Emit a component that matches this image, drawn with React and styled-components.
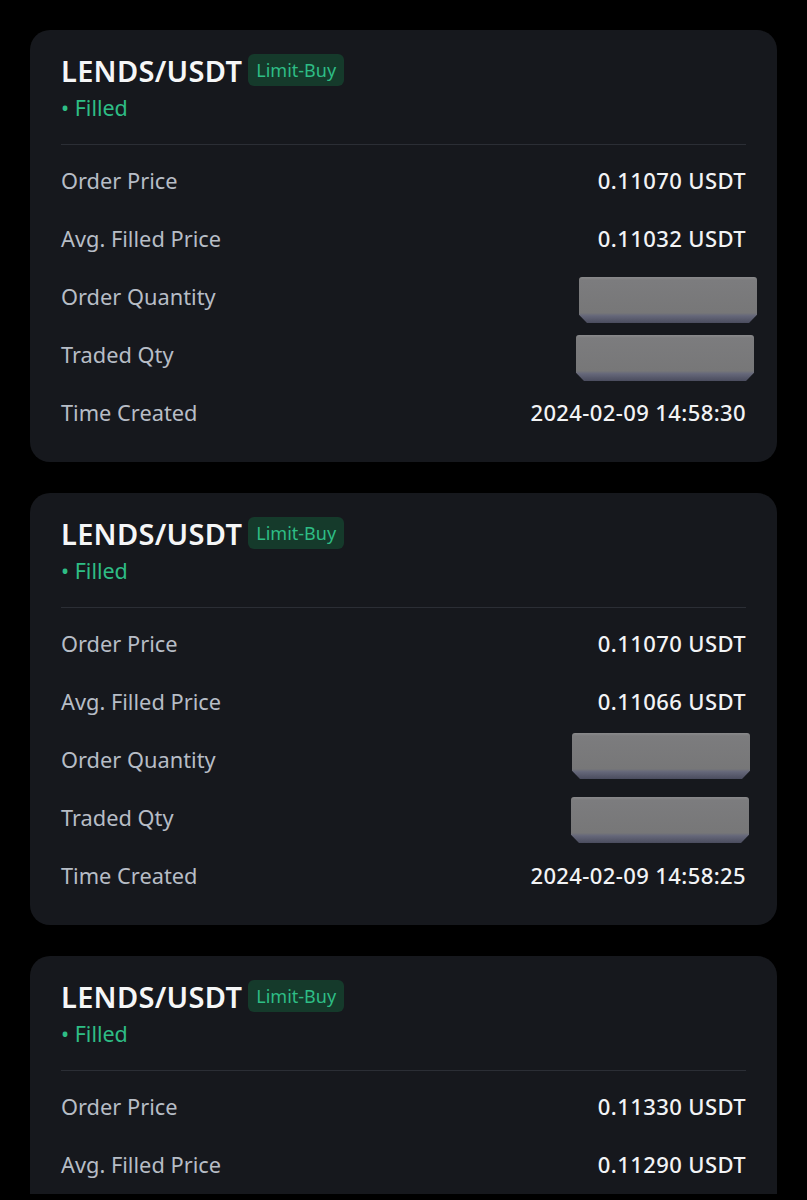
import React from "react";
import styled, { createGlobalStyle } from "styled-components";

const Global = createGlobalStyle`
  html, body {
    margin: 0;
    padding: 0;
    background: #000;
  }
  body {
    font-family: "Noto Sans", "Liberation Sans", sans-serif;
    -webkit-font-smoothing: antialiased;
  }
`;

const Page = styled.div`
  display: flex;
  flex-direction: column;
  gap: 31px;
  padding: 30px 30px 0 30px;
  height: 1200px;
  box-sizing: border-box;
  overflow: hidden;
`;

const Card = styled.div`
  background: #16181d;
  border-radius: ${(p) => (p.$cut ? "20px 20px 0 0" : "20px")};
  padding: 24px 31px ${(p) => (p.$cut ? "0" : "20px")} 31px;
  flex-shrink: 0;
`;

const TitleRow = styled.div`
  display: flex;
  align-items: center;
  gap: 6px;
  height: 32px;
`;

const Pair = styled.span`
  font-size: 29px;
  font-weight: 600;
  color: #f5f6f7;
  letter-spacing: 0.3px;
`;

const Badge = styled.span`
  display: inline-flex;
  align-items: center;
  height: 32px;
  padding: 0 8px;
  border-radius: 6px;
  background: #153a2b;
  color: #2ebd85;
  font-size: 18px;
`;

const Status = styled.div`
  margin-top: 8px;
  height: 28px;
  line-height: 28px;
  font-size: 21.5px;
  color: #2ebd85;
`;

const Divider = styled.div`
  height: 1px;
  background: #2b2e35;
  margin: 22px 0 7px 0;
`;

const Row = styled.div`
  display: flex;
  align-items: center;
  justify-content: space-between;
  height: 58px;
`;

const Label = styled.span`
  font-size: 21.8px;
  color: #b7bdc6;
  transform: translateY(-1px);
`;

const Value = styled.span`
  font-size: 22px;
  font-weight: 500;
  letter-spacing: 0.4px;
  color: #f2f3f5;
  transform: translateY(-1px);
`;

const Redacted = styled.div`
  width: 178px;
  height: 46px;
  margin-right: ${(p) => -p.$shift}px;
  transform: translateY(${(p) => p.$dy}px);
  border-radius: 3px 3px 0 0;
  background: linear-gradient(
    to bottom,
    #8a8a8c 0,
    #7c7c7e 3px,
    #777778 78%,
    #66687a 84%,
    #4a4c5e 100%
  );
  clip-path: polygon(0 0, 100% 0, 100% 82%, calc(100% - 8px) 100%, 8px 100%, 0 82%);
`;

const orders = [
  {
    price: "0.11070 USDT",
    avg: "0.11032 USDT",
    time: "2024-02-09 14:58:30",
    blocks: [
      { shift: 11, dy: 3 },
      { shift: 8, dy: 3 },
    ],
  },
  {
    price: "0.11070 USDT",
    avg: "0.11066 USDT",
    time: "2024-02-09 14:58:25",
    blocks: [
      { shift: 4, dy: -4 },
      { shift: 3, dy: 2 },
    ],
  },
  {
    price: "0.11330 USDT",
    avg: "0.11290 USDT",
    cut: true,
  },
];

function OrderCard({ o }) {
  return (
    <Card $cut={o.cut}>
      <TitleRow>
        <Pair>LENDS/USDT</Pair>
        <Badge>Limit-Buy</Badge>
      </TitleRow>
      <Status>• Filled</Status>
      <Divider />
      <Row>
        <Label>Order Price</Label>
        <Value>{o.price}</Value>
      </Row>
      <Row>
        <Label>Avg. Filled Price</Label>
        <Value>{o.avg}</Value>
      </Row>
      {!o.cut && (
        <>
          <Row>
            <Label>Order Quantity</Label>
            <Redacted $shift={o.blocks[0].shift} $dy={o.blocks[0].dy} />
          </Row>
          <Row>
            <Label>Traded Qty</Label>
            <Redacted $shift={o.blocks[1].shift} $dy={o.blocks[1].dy} />
          </Row>
          <Row>
            <Label>Time Created</Label>
            <Value>{o.time}</Value>
          </Row>
        </>
      )}
    </Card>
  );
}

export default function App() {
  return (
    <>
      <Global />
      <Page>
        {orders.map((o, i) => (
          <OrderCard key={i} o={o} />
        ))}
      </Page>
    </>
  );
}
